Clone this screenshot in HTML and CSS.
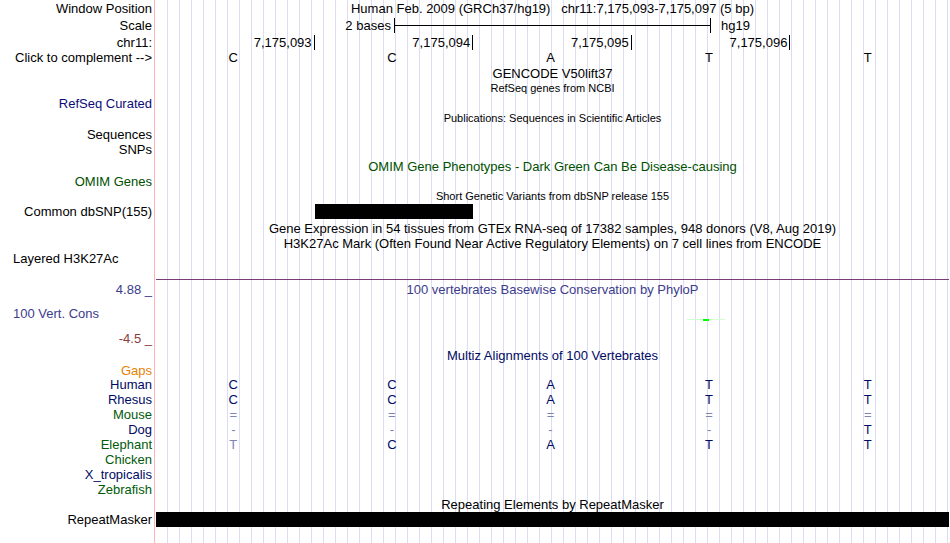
FILE: index.html
```html
<!DOCTYPE html>
<html lang="en">
<head>
    <meta charset="UTF-8">
    <meta name="viewport" content="width=device-width, initial-scale=1.0">
    <title>Human hg19 chr11:7,175,093-7,175,097</title>
    <link rel="stylesheet" href="styles.css">
</head>
<body>
    <main class="tracks">
        <!-- Ruler -->
        <div class="row tall">
            <span class="label">Window Position</span>
            <h1 class="title">Human Feb. 2009 (GRCh37/hg19) &nbsp; chr11:7,175,093-7,175,097 (5 bp)</h1>
        </div>
        <div class="row tall">
            <span class="label">Scale</span>
            <div class="scale">
                <span class="scale-size">2 bases</span>
                <span class="scale-bar"></span>
                <span class="scale-db">hg19</span>
            </div>
        </div>
        <div class="row medium">
            <span class="label">chr11:</span>
            <div class="ticks">
                <span>7,175,093</span>
                <span>7,175,094</span>
                <span>7,175,095</span>
                <span>7,175,096</span>
            </div>
        </div>
        <div class="row short">
            <span class="label">Click to complement --&gt;</span>
            <div class="bases"><span>C</span><span>C</span><span>A</span><span>T</span><span>T</span></div>
        </div>

        <!-- Genes -->
        <div class="row spaced"><h2 class="title">GENCODE V50lift37</h2></div>
        <div class="row"><h2 class="title small">RefSeq genes from NCBI</h2></div>
        <div class="row short"><span class="label refseq">RefSeq Curated</span></div>
        <div class="row tall"><h2 class="title small">Publications: Sequences in Scientific Articles</h2></div>
        <div class="row short"><span class="label">Sequences</span></div>
        <div class="row medium"><span class="label">SNPs</span></div>
        <div class="row spaced omim"><h2 class="title">OMIM Gene Phenotypes - Dark Green Can Be Disease-causing</h2></div>
        <div class="row short omim"><span class="label">OMIM Genes</span></div>

        <!-- Variants -->
        <div class="row medium"><h2 class="title small">Short Genetic Variants from dbSNP release 155</h2></div>
        <div class="row">
            <span class="label">Common dbSNP(155)</span>
            <div class="items"><span class="item snp"></span></div>
        </div>

        <!-- Expression and regulation -->
        <div class="row spaced"><h2 class="title">Gene Expression in 54 tissues from GTEx RNA-seq of 17382 samples, 948 donors (V8, Aug 2019)</h2></div>
        <div class="row"><h2 class="title">H3K27Ac Mark (Often Found Near Active Regulatory Elements) on 7 cell lines from ENCODE</h2></div>
        <div class="row histone"><span class="label left">Layered H3K27Ac</span><div class="baseline"></div></div>

        <!-- Conservation -->
        <div class="row cons">
            <span class="label">4.88 _</span>
            <h2 class="title">100 vertebrates Basewise Conservation by PhyloP</h2>
        </div>
        <div class="row cons wiggle-row">
            <span class="label left">100 Vert. Cons</span>
            <svg class="wiggle" width="38" height="2" viewBox="0 0 38 2" shape-rendering="crispEdges">
                <rect x="0" y="0" width="38" height="1" fill="#d2ffd2"/>
                <rect x="16" y="0" width="6" height="2" fill="#00ff00"/>
            </svg>
        </div>
        <div class="row low"><span class="label">-4.5 _</span></div>

        <!-- Multiz alignment -->
        <div class="row multiz spaced"><h2 class="title">Multiz Alignments of 100 Vertebrates</h2></div>
        <div class="row short gaps"><span class="label">Gaps</span></div>
        <div class="row multiz">
            <span class="label">Human</span>
            <div class="bases"><span>C</span><span>C</span><span>A</span><span>T</span><span>T</span></div>
        </div>
        <div class="row multiz">
            <span class="label">Rhesus</span>
            <div class="bases"><span>C</span><span>C</span><span>A</span><span>T</span><span>T</span></div>
        </div>
        <div class="row multiz">
            <span class="label alt">Mouse</span>
            <div class="bases"><span class="dim">=</span><span class="dim">=</span><span class="dim">=</span><span class="dim">=</span><span class="dim">=</span></div>
        </div>
        <div class="row multiz">
            <span class="label">Dog</span>
            <div class="bases"><span class="dim">-</span><span class="dim">-</span><span class="dim">-</span><span class="dim">-</span><span>T</span></div>
        </div>
        <div class="row multiz">
            <span class="label alt">Elephant</span>
            <div class="bases"><span class="dim">T</span><span>C</span><span>A</span><span>T</span><span>T</span></div>
        </div>
        <div class="row multiz"><span class="label alt">Chicken</span></div>
        <div class="row multiz"><span class="label">X_tropicalis</span></div>
        <div class="row multiz"><span class="label alt">Zebrafish</span></div>

        <!-- Repeats -->
        <div class="row"><h2 class="title">Repeating Elements by RepeatMasker</h2></div>
        <div class="row">
            <span class="label">RepeatMasker</span>
            <div class="items"><span class="item"></span></div>
        </div>
    </main>
</body>
</html>
```

FILE: styles.css
```css
* {
    box-sizing: border-box;
}
body {
    margin: 0;
    font-family: "Liberation Sans", Arial, sans-serif;
    font-size: 13px;
    line-height: 15px;
    color: #000;
    background-color: #fff;
}
/* pink divider at the end of the labels, blue guide line every 12px */
.tracks {
    min-height: 100vh;
    padding-right: 1px;
    background-image:
        linear-gradient(#ffb4b4, #ffb4b4),
        linear-gradient(90deg, #fff 156px, transparent 156px),
        repeating-linear-gradient(90deg, transparent 0, transparent 11px, #dcdcf5 11px, #dcdcf5 12px);
    background-size: 1px 100%, 100% 100%, 100% 100%;
    background-position: 154px 0, 0 0, 0 0;
    background-repeat: no-repeat;
}
.row {
    display: grid;
    grid-template-columns: 152px minmax(0, 1fr);
    column-gap: 4px;
    align-items: center;
    height: 15px;
    white-space: nowrap;
}
.row.short {
    height: 14px;
}
.row.medium {
    height: 16px;
}
.row.tall {
    height: 17px;
}
.row.spaced {
    margin-top: 2px;
}
.label {
    grid-column: 1;
    text-align: right;
}
.label.left {
    padding-left: 13px;
    text-align: left;
}
.title {
    grid-column: 2;
    margin: 0;
    font-size: 13px;
    font-weight: normal;
    text-align: center;
}
.title.small {
    font-size: 11px;
}

/* Ruler */
.scale {
    display: grid;
    grid-template-columns: 30% 40% 30%;
    align-items: center;
}
.scale-size {
    padding-right: 3px;
    text-align: right;
}
.scale-bar {
    height: 15px;
    border: solid #000;
    border-width: 0 1px;
    background: linear-gradient(#000, #000) 0 7px / 100% 1px no-repeat;
}
.scale-db {
    padding-left: 10px;
}
.ticks,
.bases {
    display: grid;
    grid-template-columns: repeat(5, minmax(0, 1fr));
}
.ticks span {
    padding-right: 2px;
    border-right: 1px solid #000;
    text-align: right;
}
.bases span {
    padding-right: 4px;
    text-align: center;
}

/* Track items */
.items {
    display: flex;
    height: 15px;
}
.item {
    width: 100%;
    background-color: #000;
}
.item.snp {
    width: 20%;
    margin-left: 20%;
}
.row.histone {
    height: 29px;
    align-items: start;
}
.baseline {
    align-self: end;
    height: 1px;
    background-color: #783c78;
}
.row.cons {
    margin-top: 2px;
    color: #3c3c8c;
}
.row.wiggle-row {
    margin-top: 9px;
}
.wiggle {
    display: block;
    align-self: end;
    margin-left: 67%;
}
.row.low {
    margin-top: 10px;
    color: #8c3c3c;
}

/* Track colors */
.refseq {
    color: #0c0c78;
}
.omim {
    color: #005000;
}
.gaps {
    color: #e68200;
}
.multiz {
    color: #000a64;
}
.alt {
    color: #005a0a;
}
.dim {
    color: #8084b1;
}
```
